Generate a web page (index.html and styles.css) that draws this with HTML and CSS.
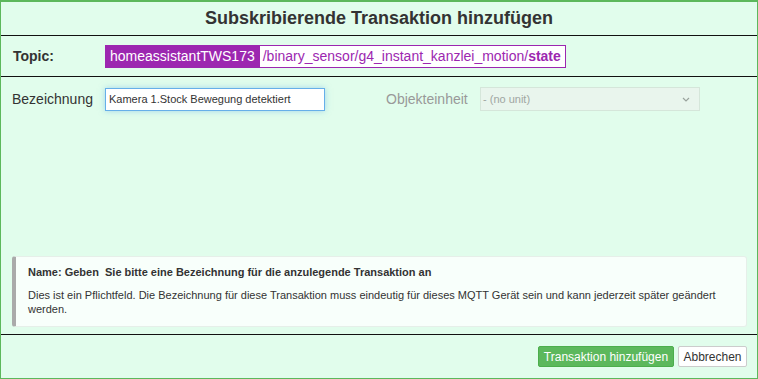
FILE: index.html
```html
<!DOCTYPE html>
<html lang="de">

<head>
    <meta charset="UTF-8">
    <meta name="viewport" content="width=device-width, initial-scale=1.0">
    <title>Subskribierende Transaktion hinzufügen</title>
    <link rel="stylesheet" href="styles.css">
</head>

<body>

    <div class="dialog">
        <div class="dialog-header">
            <h1 class="dialog-title">Subskribierende Transaktion hinzufügen</h1>
        </div>

        <div class="topic-row">
            <span class="topic-label">Topic:</span>
            <span class="topic-prefix">homeassistantTWS173</span>
            <span class="topic-path">/binary_sensor/g4_instant_kanzlei_motion/<b>state</b></span>
        </div>

        <div class="dialog-body">
            <div class="form-row">
                <label class="field-label" for="bezeichnung">Bezeichnung</label>
                <input class="field-input" type="text" id="bezeichnung" value="Kamera 1.Stock Bewegung detektiert">

                <label class="field-label field-label-disabled" for="einheit">Objekteinheit</label>
                <div class="field-select">
                    <span>- (no unit)</span>
                    <svg class="select-caret" width="8" height="5" viewBox="0 0 8 5">
                        <path d="M1 1 L4 4 L7 1" fill="none" stroke="#9aa39d" stroke-width="1.2"/>
                    </svg>
                </div>
            </div>

            <div class="info-box">
                <div class="info-title">Name: Geben&nbsp; Sie bitte eine Bezeichnung für die anzulegende Transaktion an</div>
                <div class="info-text">Dies ist ein Pflichtfeld. Die Bezeichnung für diese Transaktion muss eindeutig für dieses MQTT Gerät sein und kann jederzeit später geändert werden.</div>
            </div>
        </div>

        <div class="dialog-footer">
            <button class="btn btn-success" type="button">Transaktion hinzufügen</button>
            <button class="btn btn-default" type="button">Abbrechen</button>
        </div>
    </div>

</body>

</html>
```

FILE: styles.css
```css
body {
    margin: 0;
    padding: 0;
    font-family: "Liberation Sans", Arial, sans-serif;
    color: #333;
}

.dialog {
    width: 758px;
    height: 379px;
    box-sizing: border-box;
    border: 1px solid #5cb85c;
    border-top-width: 2px;
    background-color: #e1fdec;
    display: flex;
    flex-direction: column;
}

/* Cabecera */
.dialog-header {
    height: 33px;
    border-bottom: 1px solid #111;
    display: flex;
    align-items: center;
    justify-content: center;
}

.dialog-title {
    margin: 0;
    font-size: 18px;
    font-weight: bold;
    color: #333;
}

/* Topic */
.topic-row {
    height: 40px;
    border-bottom: 1px solid #111;
    display: flex;
    align-items: center;
    padding-left: 12px;
}

.topic-label {
    width: 92px;
    font-size: 14px;
    font-weight: bold;
}

.topic-prefix {
    height: 23px;
    line-height: 23px;
    padding: 0 4px 0 5px;
    background-color: #9c27b0;
    color: #fff;
    font-size: 14px;
}

.topic-path {
    height: 21px;
    line-height: 21px;
    padding: 0 4px 0 3px;
    border: 1px solid #9c27b0;
    background-color: #fff;
    color: #9c27b0;
    font-size: 14px;
}

/* Cuerpo */
.dialog-body {
    flex: 1;
    display: flex;
    flex-direction: column;
    padding: 10px 10px 7px 11px;
    border-bottom: 1px solid #111;
}

.form-row {
    display: flex;
    align-items: center;
}

.field-label {
    width: 93px;
    font-size: 14px;
    color: #333;
}

.field-label-disabled {
    width: 94px;
    color: #999;
    margin-left: 61px;
}

.field-input {
    width: 220px;
    height: 23px;
    box-sizing: border-box;
    margin: 0;
    padding: 0 3px;
    border: 1px solid #66afe9;
    outline: none;
    box-shadow: 0 0 6px rgba(102, 175, 233, 0.5);
    font-family: inherit;
    font-size: 11px;
    color: #333;
    background-color: #fff;
}

.field-select {
    width: 220px;
    height: 24px;
    box-sizing: border-box;
    padding: 0 9px 0 2px;
    border: 1px solid #d5e6da;
    background-color: #e9f5ed;
    display: flex;
    align-items: center;
    justify-content: space-between;
    font-size: 11px;
    color: #a0a6a2;
}

.select-caret {
    display: block;
}

.info-box {
    margin-top: auto;
    padding: 8px 12px 10px 12px;
    background-color: #f8fffb;
    border: 1px solid #e6efe9;
    border-left: 4px solid #aaa;
    border-radius: 3px;
    font-size: 11px;
    line-height: 14px;
}

.info-title {
    font-weight: bold;
    margin-bottom: 9px;
}

/* Pie */
.dialog-footer {
    display: flex;
    justify-content: flex-end;
    gap: 4px;
    padding: 11px 10px 0 0;
    height: 43px;
    box-sizing: border-box;
}

.btn {
    height: 21px;
    padding: 0;
    font-family: inherit;
    font-size: 12px;
    white-space: nowrap;
    border-radius: 2px;
    cursor: pointer;
}

.btn-success {
    width: 136px;
    background-color: #5cb85c;
    border: 1px solid #4cae4c;
    color: #fff;
}

.btn-default {
    width: 69px;
    background-color: #fff;
    border: 1px solid #ccc;
    color: #333;
}
```
